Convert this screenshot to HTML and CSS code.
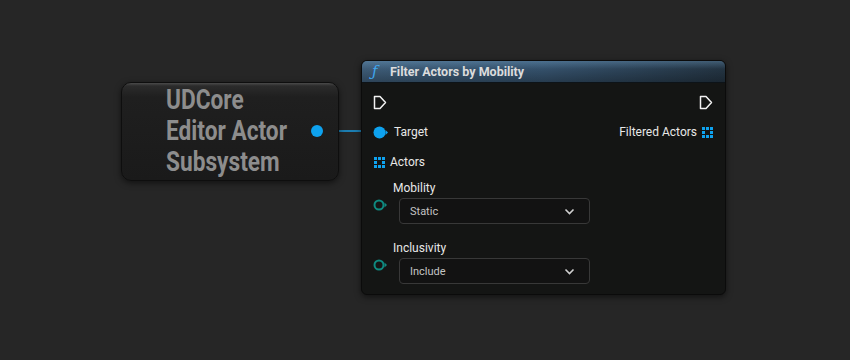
FILE: index.html
```html
<!DOCTYPE html>
<html lang="en">
<head>
    <meta charset="UTF-8">
    <title>Filter Actors by Mobility</title>
    <link rel="stylesheet" href="styles.css">
</head>
<body>
    <div class="graph">
        <svg class="wire" width="850" height="360">
            <line x1="320" y1="131" x2="378" y2="131" stroke="#1a9be0" stroke-width="1.6" />
        </svg>

        <div class="node ref-node">
            <div class="ref-title">UDCore<br>Editor Actor<br>Subsystem</div>
            <span class="ref-pin"></span>
        </div>

        <div class="node func-node">
            <div class="func-header">
                <span class="func-icon">&#402;</span>
                <span class="func-title">Filter Actors by Mobility</span>
            </div>
            <div class="func-body">
                <div class="row">
                    <svg class="exec" width="14" height="15" viewBox="0 0 14 15"><path d="M1.5 1.5 H7 L12.5 7.5 L7 13.5 H1.5 Z" fill="none" stroke="#f2f2f2" stroke-width="1.5" stroke-linejoin="round"/></svg>
                    <svg class="exec" width="14" height="15" viewBox="0 0 14 15"><path d="M1.5 1.5 H7 L12.5 7.5 L7 13.5 H1.5 Z" fill="none" stroke="#f2f2f2" stroke-width="1.5" stroke-linejoin="round"/></svg>
                </div>
                <div class="row">
                    <div class="pin-label">
                        <svg width="16" height="13" viewBox="0 0 16 13"><circle cx="6.5" cy="6.5" r="6" fill="#0ea2ef"/><path d="M12.5 4 L15 6.5 L12.5 9 Z" fill="#0ea2ef"/></svg>
                        <span class="label target">Target</span>
                    </div>
                    <div class="pin-label">
                        <span class="label">Filtered Actors</span>
                        <svg class="grid-icon" width="11" height="11" viewBox="0 0 11 11" fill="#0ea2ef"><rect x="0" y="0" width="3" height="3"/><rect x="4" y="0" width="3" height="3"/><rect x="8" y="0" width="3" height="3"/><rect x="0" y="4" width="3" height="3"/><rect x="8" y="4" width="3" height="3"/><rect x="0" y="8" width="3" height="3"/><rect x="4" y="8" width="3" height="3"/><rect x="8" y="8" width="3" height="3"/></svg>
                    </div>
                </div>
                <div class="row">
                    <div class="pin-label">
                        <svg class="grid-icon" width="11" height="11" viewBox="0 0 11 11" fill="#0ea2ef"><rect x="0" y="0" width="3" height="3"/><rect x="4" y="0" width="3" height="3"/><rect x="8" y="0" width="3" height="3"/><rect x="0" y="4" width="3" height="3"/><rect x="8" y="4" width="3" height="3"/><rect x="0" y="8" width="3" height="3"/><rect x="4" y="8" width="3" height="3"/><rect x="8" y="8" width="3" height="3"/></svg>
                        <span class="label actors">Actors</span>
                    </div>
                </div>

                <div class="enum-group first">
                    <svg class="enum-pin" width="15" height="12" viewBox="0 0 15 12"><circle cx="6" cy="6" r="4.5" fill="none" stroke="#0f8a80" stroke-width="2"/><path d="M11.5 3.5 L14 6 L11.5 8.5 Z" fill="#0f8a80"/></svg>
                    <div class="enum-field">
                        <div class="label">Mobility</div>
                        <div class="dropdown"><span>Static</span><svg width="11" height="7" viewBox="0 0 11 7"><path d="M1.5 1.5 L5.5 5.5 L9.5 1.5" fill="none" stroke="#cfcfcf" stroke-width="1.6"/></svg></div>
                    </div>
                </div>
                <div class="enum-group">
                    <svg class="enum-pin" width="15" height="12" viewBox="0 0 15 12"><circle cx="6" cy="6" r="4.5" fill="none" stroke="#0f8a80" stroke-width="2"/><path d="M11.5 3.5 L14 6 L11.5 8.5 Z" fill="#0f8a80"/></svg>
                    <div class="enum-field">
                        <div class="label">Inclusivity</div>
                        <div class="dropdown"><span>Include</span><svg width="11" height="7" viewBox="0 0 11 7"><path d="M1.5 1.5 L5.5 5.5 L9.5 1.5" fill="none" stroke="#cfcfcf" stroke-width="1.6"/></svg></div>
                    </div>
                </div>
            </div>
        </div>
    </div>
</body>
</html>
```

FILE: styles.css
```css
body {
    margin: 0;
    background: #262626;
    font-family: Roboto, "Liberation Sans", sans-serif;
}
.graph {
    position: relative;
    width: 850px;
    height: 360px;
    overflow: hidden;
}
.wire {
    position: absolute;
    left: 0;
    top: 0;
}
.node {
    position: absolute;
    box-sizing: border-box;
    box-shadow: 0 2px 6px rgba(0,0,0,0.55);
}

/* reference node on the left */
.ref-node {
    left: 121px;
    top: 82px;
    width: 218px;
    height: 99px;
    border-radius: 10px;
    border: 1px solid #0e0e0e;
    background: linear-gradient(to bottom, #4a4a4a 0px, #2b2b2b 3px, #1f1f1f 14px, #1a1a1a 100%);
}
.ref-title {
    margin: 2px 0 0 44px;
    font-family: Roboto, sans-serif;
    font-weight: bold;
    font-size: 27px;
    line-height: 31px;
    color: #8d8d8d;
    transform: scaleX(0.84);
    transform-origin: left top;
    white-space: nowrap;
}
.ref-pin {
    position: absolute;
    left: 189px;
    top: 42px;
    width: 12px;
    height: 12px;
    border-radius: 50%;
    background: #0ea2ef;
}

/* function node */
.func-node {
    left: 361px;
    top: 60px;
    width: 365px;
    height: 235px;
    border-radius: 6px;
    border: 1px solid #0b0b0b;
    background: #141514;
    overflow: hidden;
}
.func-header {
    height: 21px;
    display: flex;
    align-items: center;
    padding-left: 10px;
    background: linear-gradient(to bottom, rgba(120,170,210,0.35) 0px, rgba(0,0,0,0) 8px, rgba(0,0,0,0.25) 21px),
                linear-gradient(to right, #3d5b76 0%, #34506a 50%, #233341 100%);
    border-bottom: 1px solid #0d1318;
}
.func-icon {
    font-family: "DejaVu Serif", serif;
    font-style: italic;
    color: #3fa6ee;
    font-size: 15px;
    width: 18px;
    margin-top: -1px;
}
.func-title {
    color: #dcdcdc;
    font-weight: bold;
    font-size: 12.5px;
}
.func-body {
    padding: 8px 12px 0 11px;
}
.row {
    height: 22px;
    margin-bottom: 8px;
    display: flex;
    align-items: center;
    justify-content: space-between;
}
.pin-label {
    display: flex;
    align-items: center;
}
.label {
    color: #e8e8e8;
    font-size: 12px;
}
.label.target {
    margin-left: 5px;
}
.label.actors {
    margin-left: 5px;
}
.grid-icon {
    margin-left: 5px;
}
.pin-label .grid-icon:first-child {
    margin-left: 1px;
}
.exec {
    display: block;
}
.enum-group {
    display: flex;
    align-items: center;
    margin-top: 17px;
}
.enum-group.first {
    margin-top: 6px;
}
.enum-pin {
    margin-top: 4px;
    margin-right: 5px;
}
.enum-field .label {
    height: 14px;
    line-height: 14px;
    margin-bottom: 3px;
}
.dropdown {
    margin-left: 6px;
    width: 191px;
    height: 26px;
    box-sizing: border-box;
    border: 1px solid #383838;
    border-radius: 4px;
    background: #121212;
    display: flex;
    align-items: center;
    justify-content: space-between;
    padding: 0 14px 0 10px;
    color: #c4c4c4;
    font-size: 11px;
}
```
